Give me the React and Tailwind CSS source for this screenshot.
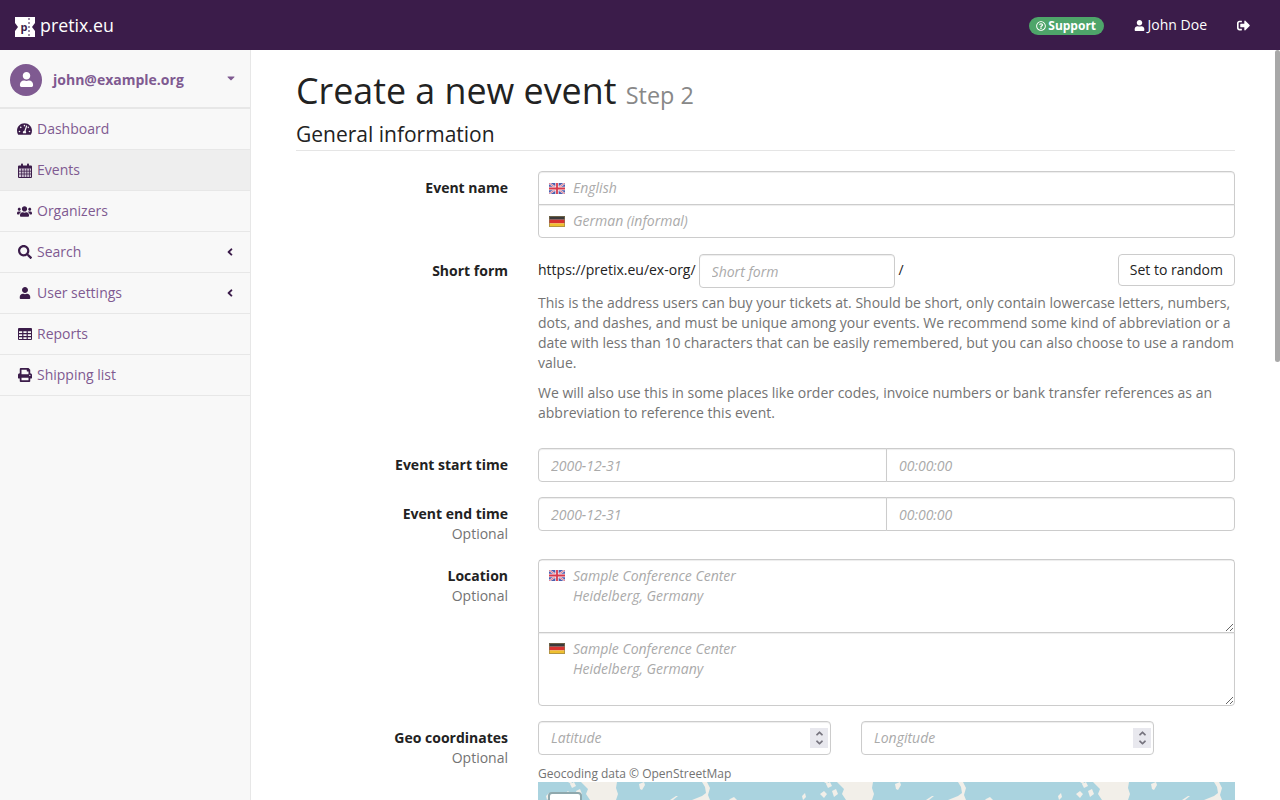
import {
  FaTachometerAlt, FaUsers, FaSearch, FaUser, FaPrint,
  FaSignOutAlt, FaRegQuestionCircle, FaAngleLeft, FaCaretDown, FaAngleUp, FaAngleDown,
} from 'react-icons/fa';

const CalendarIcon = () => (
  <svg width="14" height="15" viewBox="0 0 14 15">
    <path d="M0 3.5A1 1 0 0 1 1 2.5H13A1 1 0 0 1 14 3.5V14A1 1 0 0 1 13 15H1A1 1 0 0 1 0 14Z" fill="currentColor" />
    <rect x="3" y="0.5" width="2" height="3.5" rx="0.8" fill="currentColor" />
    <rect x="9" y="0.5" width="2" height="3.5" rx="0.8" fill="currentColor" />
    <path d="M1 5.5H13V14H1Z" fill="#d3c8d8" />
    <path d="M3.6 5.5V14M6.2 5.5V14M8.8 5.5V14M11.4 5.5V14M1 8.2H13M1 11H13" stroke="currentColor" strokeWidth="0.8" />
  </svg>
);

const TableIcon = () => (
  <svg width="14" height="12" viewBox="0 0 14 12">
    <rect width="14" height="12" rx="1" fill="currentColor" />
    <path d="M1 3.2H4.2V5H1ZM5.4 3.2H8.6V5H5.4ZM9.8 3.2H13V5H9.8ZM1 6.2H4.2V8H1ZM5.4 6.2H8.6V8H5.4ZM9.8 6.2H13V8H9.8ZM1 9.2H4.2V11H1ZM5.4 9.2H8.6V11H5.4ZM9.8 9.2H13V11H9.8Z" fill="#f8f8f8" />
  </svg>
);

const NAV = [
  { label: 'Dashboard', icon: <FaTachometerAlt className="text-[16px]" /> },
  { label: 'Events', icon: <CalendarIcon />, active: true },
  { label: 'Organizers', icon: <FaUsers className="text-[17px]" /> },
  { label: 'Search', icon: <FaSearch className="text-[14px]" />, arrow: true },
  { label: 'User settings', icon: <FaUser className="text-[12px]" />, arrow: true },
  { label: 'Reports', icon: <TableIcon /> },
  { label: 'Shipping list', icon: <FaPrint className="text-[14px]" /> },
];

const inputClass = 'h-[34px] px-3 border border-[#ccc] bg-white text-sm text-[#222] italic placeholder:text-[#aaa] outline-none shadow-[inset_0_1px_1px_rgba(0,0,0,0.075)]';

const UkFlag = () => (
  <svg width="16" height="11" viewBox="0 0 16 11" className="shrink-0">
    <rect width="16" height="11" fill="#4c5fb0" />
    <path d="M0 0L16 11M16 0L0 11" stroke="#ecdfe6" strokeWidth="2" />
    <path d="M0 0L16 11M16 0L0 11" stroke="#d8506a" strokeWidth="0.7" />
    <path d="M8 0V11M0 5.5H16" stroke="#f6eef1" strokeWidth="3.4" />
    <path d="M8 0V11M0 5.5H16" stroke="#d8394c" strokeWidth="1.8" />
  </svg>
);

const DeFlag = () => (
  <svg width="16" height="11" viewBox="0 0 16 11" className="shrink-0">
    <rect width="16" height="3.7" fill="#3a3a3a" />
    <rect y="3.7" width="16" height="3.7" fill="#d8322f" />
    <rect y="7.4" width="16" height="3.6" fill="#efc02f" />
    <rect x="0.5" y="0.5" width="15" height="10" fill="none" stroke="#8a7a50" strokeOpacity="0.6" />
  </svg>
);

function Label({ children, optional, className = 'pt-[7px]' }) {
  return (
    <div className={`w-[212px] shrink-0 text-right text-sm leading-5 text-[#222] ${className}`}>
      <div className="font-bold">{children}</div>
      {optional && <div className="text-[#737373]">Optional</div>}
    </div>
  );
}

function Row({ label, optional, className, children }) {
  return (
    <div className={`flex gap-[30px] ${className}`}>
      <Label optional={optional}>{label}</Label>
      <div className="flex-1 min-w-0">{children}</div>
    </div>
  );
}

function LangInput({ flag, placeholder, first }) {
  return (
    <div className={`flex items-center h-[34px] bg-white border border-[#ccc] shadow-[inset_0_1px_1px_rgba(0,0,0,0.075)] ${first ? 'rounded-t-[4px]' : '-mt-px rounded-b-[4px]'}`}>
      <div className="w-[34px] flex justify-center pl-px">{flag}</div>
      <input placeholder={placeholder} className="flex-1 text-sm italic placeholder:text-[#aaa] outline-none" />
    </div>
  );
}

function LangArea({ flag, first }) {
  return (
    <div className={`relative h-[74px] bg-white border border-[#ccc] ${first ? 'rounded-t-[4px]' : '-mt-px rounded-b-[4px]'}`}>
      <div className="absolute left-[10px] top-[10px]">{flag}</div>
      <textarea
        placeholder={'Sample Conference Center\nHeidelberg, Germany'}
        className="block w-full h-full pl-[34px] pr-3 py-[6px] text-sm leading-5 italic placeholder:text-[#aaa] outline-none resize shadow-[inset_0_1px_1px_rgba(0,0,0,0.075)]"
      />
    </div>
  );
}

function DateTime() {
  return (
    <div className="flex">
      <input placeholder="2000-12-31" className={`${inputClass} w-[349px] rounded-l-[4px]`} />
      <input placeholder="00:00:00" className={`${inputClass} flex-1 min-w-0 -ml-px rounded-r-[4px]`} />
    </div>
  );
}

function NumberInput({ placeholder }) {
  return (
    <div className="relative w-[293px] h-[34px] bg-white border border-[#ccc] rounded-[4px] flex items-center shadow-[inset_0_1px_1px_rgba(0,0,0,0.075)]">
      <input placeholder={placeholder} className="flex-1 min-w-0 px-3 text-sm italic placeholder:text-[#aaa] outline-none" />
      <div className="absolute right-[2px] top-[6px] w-[18px] h-[20px] bg-[#e8e8ee] flex flex-col items-center justify-center text-[#77757f]">
        <FaAngleUp className="text-[11px] -mb-[2px]" />
        <FaAngleDown className="text-[11px]" />
      </div>
    </div>
  );
}

// one 256px map tile, repeated along the strip
const MapTile = ({ x }) => (
  <g transform={`translate(${x} 0)`} fill="#f2efe9">
    <path d="M43 0H79L78 6L80 12L78 18H52L48 12L50 7Z" />
    <path d="M8 14L11 11L12 15L9 18ZM26 12L30 9L33 12L30 16ZM32 2L36 0L38 4L34 6ZM38 9L42 7L44 12L40 15ZM30 0H34L33 2Z" />
    <path d="M101 2L106 0L107 3L104 8L102 7Z" />
    <path d="M132 18L138 14L140 14L135 18Z" />
    <path d="M154 18L164 14L168 11L167 5L164 0H169L172 6L170 13L172 18Z" />
    <path d="M192 17L196 15L199 18H191Z" />
  </g>
);

function GeoMap() {
  return (
    <div className="relative h-[18px] overflow-hidden bg-[#aad3df]">
      <svg width="697" height="18" viewBox="0 0 697 18" className="block">
        <MapTile x={0} />
        <MapTile x={256} />
        <MapTile x={512} />
      </svg>
      <div className="absolute left-[10px] top-[10px] w-[34px] h-[34px] bg-white rounded-[4px] border-2 border-[#8fa8ad]" />
    </div>
  );
}

export default function App() {
  return (
    <div className="h-[800px] overflow-hidden bg-white flex flex-col font-['Open_Sans',sans-serif] text-sm text-[#222]">
      <header className="h-[50px] shrink-0 bg-[#3b1c4a] flex items-center text-white">
        <div className="flex items-center pl-[15px] gap-[5px]">
          <svg width="20" height="20" viewBox="0 0 20 20" className="mt-[3px]">
            <path d="M0 0H20V6L17 10L20 14V20H0V14L3 10L0 6Z" fill="#fff" />
            <text x="5.5" y="14" fontSize="11" fontWeight="700" fill="#3b1c4a" fontFamily="'Open Sans', sans-serif">p</text>
            <path d="M14 1V19" stroke="#3b1c4a" strokeWidth="1" strokeDasharray="2 2" />
          </svg>
          <span className="text-[17.8px] leading-[25px]">pretix.eu</span>
        </div>
        <div className="ml-auto flex items-center">
          <span className="flex items-center gap-[2px] h-[18px] mt-[2px] px-[7.5px] rounded-full bg-[#4ea56a] text-xs font-bold">
            <FaRegQuestionCircle className="text-[10px]" />
            Support
          </span>
          <span className="ml-[30px] flex items-center gap-[3px]">
            <FaUser className="text-[11px]" />
            John Doe
          </span>
          <FaSignOutAlt className="ml-[30px] mr-[30px] text-[13px]" />
        </div>
      </header>

      <div className="flex flex-1 min-h-0">
        <aside className="w-[251px] shrink-0 bg-[#f8f8f8] border-r border-[#e7e7e7]">
          <div className="h-[59px] flex items-center pt-[2px] pl-[10px] pr-[13px] border-b-2 border-[#e7e7e7]">
            <div className="w-8 h-8 rounded-full bg-[#7f5a91] flex items-center justify-center text-white">
              <FaUser className="text-[15px]" />
            </div>
            <span className="ml-[11px] font-bold text-[#7f5a91]">john@example.org</span>
            <FaCaretDown className="ml-auto -mt-[3px] text-[#7f5a91] text-[12px]" />
          </div>
          <nav>
            {NAV.map((item) => (
              <a
                key={item.label}
                className={`h-[41px] flex items-center pl-[17px] pr-[14px] border-b border-[#e7e7e7] text-[#7f5a91] ${item.active ? 'bg-[#eeeeee]' : ''}`}
              >
                <span className="w-[15px] flex justify-center text-[#3b1c4a]">{item.icon}</span>
                <span className="ml-[5px]">{item.label}</span>
                {item.arrow && <FaAngleLeft className="ml-auto text-[#3b1c4a] text-[12px]" />}
              </a>
            ))}
          </nav>
        </aside>

        <main className="relative flex-1 min-w-0 pl-[45px] pr-[45px]">
          <h1 className="mt-[20px] text-[35.8px] leading-[40px] text-[#222]">
            Create a new event <small className="text-[23.4px] leading-none text-[#888]">Step 2</small>
          </h1>
          <h2 className="mt-[9px] pb-px text-[21px] leading-[30px] border-b border-[#e5e5e5]">General information</h2>

          <Row label="Event name" className="mt-[20px]">
            <LangInput first flag={<UkFlag />} placeholder="English" />
            <LangInput flag={<DeFlag />} placeholder="German (informal)" />
          </Row>

          <Row label="Short form" className="mt-[16px]">
            <div className="flex items-center h-[34px]">
              <span className="-mt-[2px]">https://pretix.eu/ex-org/</span>
              <input placeholder="Short form" className={`${inputClass} w-[196px] ml-[3px] rounded-[4px]`} />
              <span className="ml-1 -mt-[2px]">/</span>
              <button className="ml-auto self-start h-[32px] px-[11px] bg-white border border-[#ccc] rounded-[4px] text-[#222]">Set to random</button>
            </div>
            <p className="mt-[5px] leading-5 text-[#737373]">
              This is the address users can buy your tickets at. Should be short, only contain lowercase letters, numbers, dots, and dashes, and must be unique among your events. We recommend some kind of abbreviation or a date with less than 10 characters that can be easily remembered, but you can also choose to use a random value.
            </p>
            <p className="mt-[10px] leading-5 text-[#737373]">
              We will also use this in some places like order codes, invoice numbers or bank transfer references as an abbreviation to reference this event.
            </p>
          </Row>

          <Row label="Event start time" className="mt-[25px]">
            <DateTime />
          </Row>

          <Row label="Event end time" optional className="mt-[15px]">
            <DateTime />
          </Row>

          <Row label="Location" optional className="mt-[15px]">
            <LangArea first flag={<UkFlag />} />
            <LangArea flag={<DeFlag />} />
          </Row>

          <Row label="Geo coordinates" optional className="mt-[15px]">
            <div className="flex gap-[30px]">
              <NumberInput placeholder="Latitude" />
              <NumberInput placeholder="Longitude" />
            </div>
            <p className="mt-[10px] text-xs leading-[17px] text-[#737373]">Geocoding data © OpenStreetMap</p>
            <GeoMap />
          </Row>

          <div className="absolute right-0 top-0 w-[5px] h-[312px] bg-[#a8a8a8] rounded-sm" />
        </main>
      </div>
    </div>
  );
}
